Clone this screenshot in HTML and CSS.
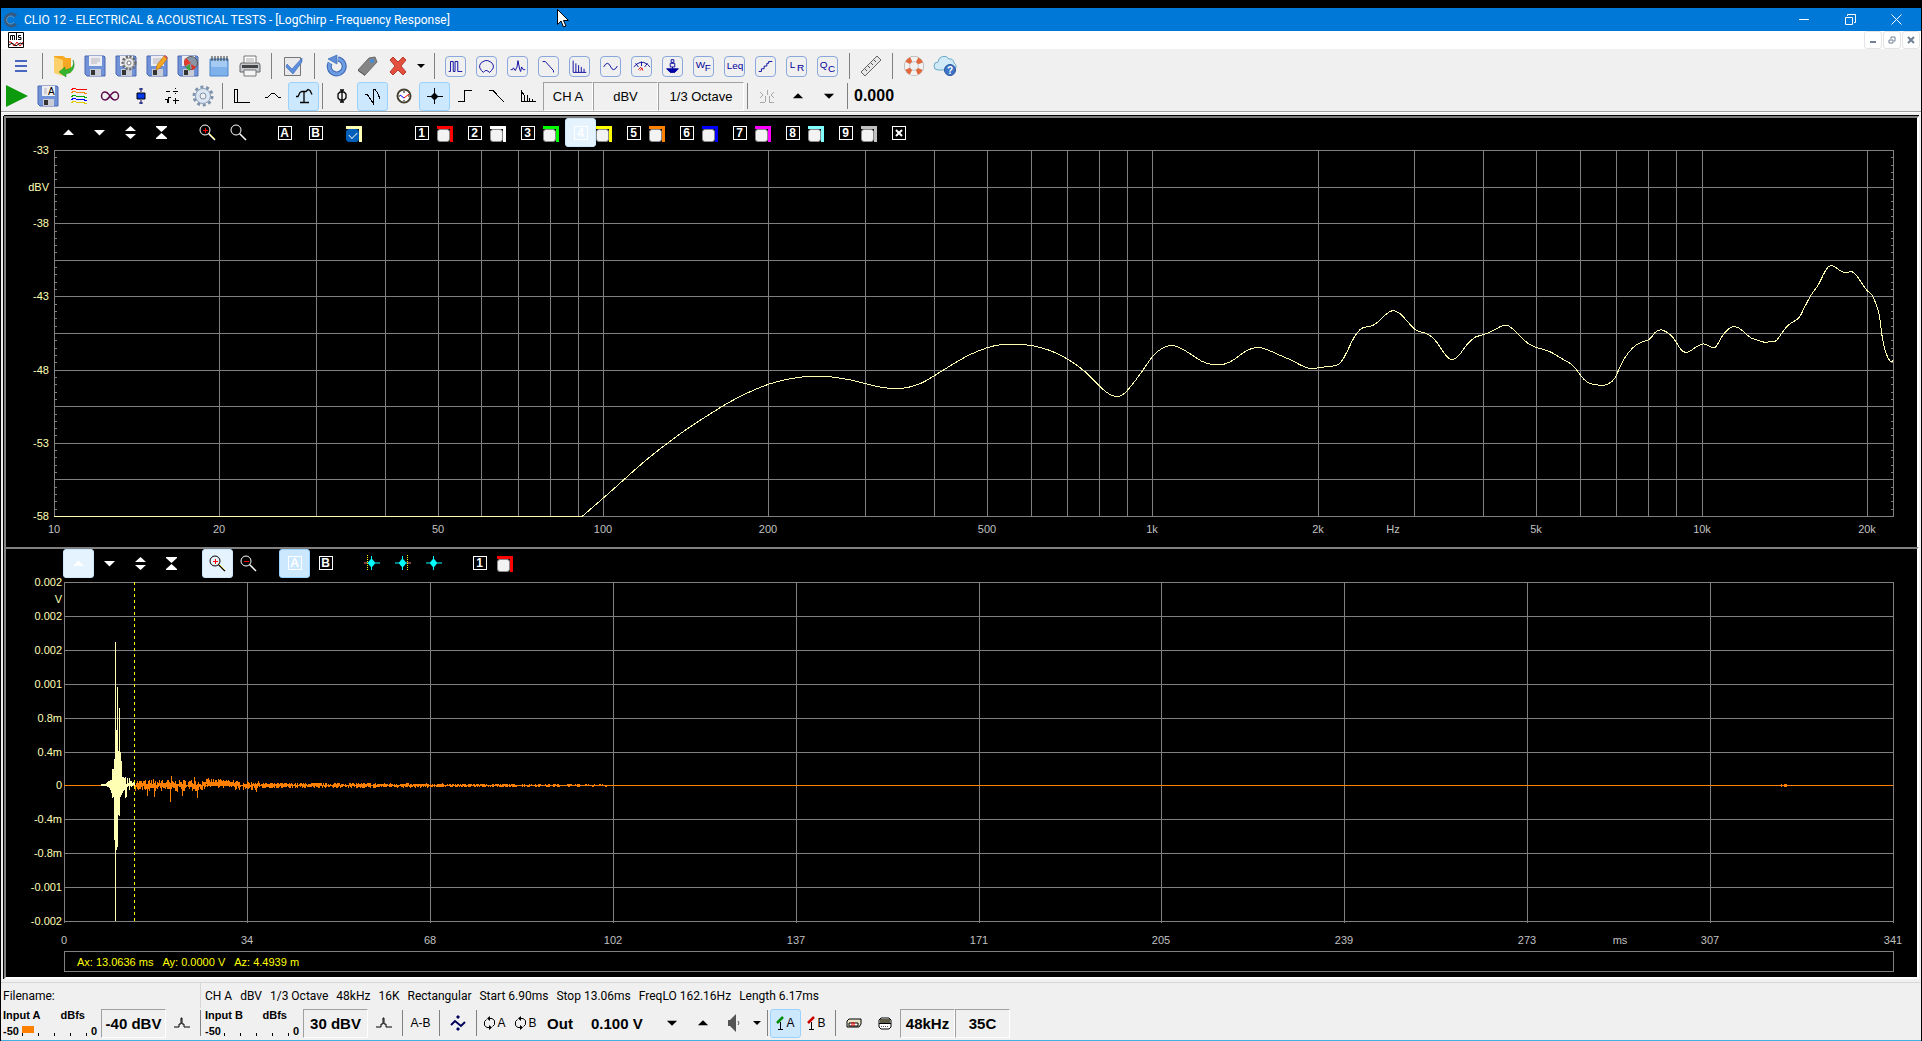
FILE: index.html
```
<!DOCTYPE html>
<html lang="en">
<head>
    <meta charset="UTF-8">
    <title>CLIO 12 - ELECTRICAL &amp; ACOUSTICAL TESTS</title>
    <link rel="stylesheet" href="styles.css">
</head>
<body>
<!-- shared icons -->
<svg class="defs" aria-hidden="true">
    <symbol id="up" viewBox="0 0 15 15"><path d="M2 10h11L7.500 4.500z"/></symbol>
    <symbol id="down" viewBox="0 0 15 15"><path d="M2 5h11l-5.500 5.500z"/></symbol>
    <symbol id="expand" viewBox="0 0 15 15"><path d="M2 6h11L7.500 1zM2 9h11l-5.500 5z"/></symbol>
    <symbol id="squeeze" viewBox="0 0 15 15"><path d="M2 1h11v1L7.500 7 2 2zM2 14h11v-1L7.500 8 2 13z"/></symbol>
    <symbol id="caret" viewBox="0 0 8 8"><path d="M0 2h8L4 6z"/></symbol>
    <symbol id="floppy" viewBox="0 0 22 22">
        <path d="M1 1h19l1 1v19H3l-2-2z" fill="#6f92d8" stroke="#4a68b0"/>
        <path d="M5 1h13v10H5z" fill="#eeeef2"/>
        <path d="M7 4h9M7 6h9M7 8h6" stroke="#b4b4bc"/>
        <path d="M6 14h11v7H6z" fill="#c9ccd6"/>
        <path d="M7 15h4v5H7z" fill="#333"/>
    </symbol>
    <symbol id="cog" viewBox="0 0 22 22">
        <circle cx="11" cy="11" r="9" fill="none" stroke="#7f93ac" stroke-width="3" stroke-dasharray="3 2.650"/>
        <circle cx="11" cy="11" r="7.500" fill="#dce6f2" stroke="#8a9fba"/>
        <circle cx="11" cy="11" r="3" fill="#f0f0f0" stroke="#7f93ac"/>
    </symbol>
    <symbol id="lens" viewBox="0 0 17 17">
        <circle cx="6" cy="6" r="5" fill="none" stroke="currentColor"/>
        <path d="M9.500 9.500l6.500 6.500" stroke="currentColor" stroke-width="1.500"/>
    </symbol>
    <symbol id="bell" viewBox="0 0 18 12"><path d="M1 10h5V7h2V1h1v6h2v3h6" fill="none" stroke="#000"/></symbol>
    <symbol id="burst" viewBox="0 0 16 16"><path d="M0 7.500h4l2-2.500 1-1V1h1v3l1 1 2 2.500h5v1h-5l-2 2.500-1 1v3H7v-3l-1-1-2-2.500H0z" fill="#0ff"/></symbol>
</svg>

<header class="title">
    <svg class="logo" width="16" height="16" viewBox="0 0 16 16"><path d="M13 4A6 6 0 1 0 13 12" fill="none" stroke="#345a80" stroke-width="3"/><path d="M11 6A4 4 0 1 0 11 10" fill="none" stroke="#6d93b5"/></svg>
    <h1>CLIO 12 - ELECTRICAL &amp; ACOUSTICAL TESTS - [LogChirp - Frequency Response]</h1>
    <div class="win">
        <button aria-label="Minimize"><svg width="11" height="11" viewBox="0 0 11 11"><path d="M0 5.500h10"/></svg></button>
        <button aria-label="Restore"><svg width="11" height="11" viewBox="0 0 11 11"><path d="M.5 3.500h7v7h-7zM2.500 2V.5h8v8H9"/></svg></button>
        <button aria-label="Close"><svg width="11" height="11" viewBox="0 0 11 11"><path d="M.5.5l10 10M10.500.5l-10 10"/></svg></button>
    </div>
</header>

<div class="menubar">
    <svg width="16" height="16" viewBox="0 0 16 16"><path d="M.5.5h15v15H.5z" fill="#fff" stroke="#000"/><path d="M2.500 8V3.500h2V8m0-4.500h2V8M8.500 1v7M13 3.500h-2.500v2H13v2h-3" fill="none" stroke="#000"/><path d="M1 10l2 0 3 4 3-4 3 4 3-4" fill="none" stroke="#e00000"/><path d="M1 13l3-2 4 3 4-3 3 1" fill="none" stroke="#000"/></svg>
    <div class="mdi">
        <button aria-label="Minimize document"><svg width="8" height="8" viewBox="0 0 8 8"><path d="M1 6h6"/></svg></button>
        <button aria-label="Restore document"><svg width="8" height="8" viewBox="0 0 8 8"><path d="M1 4h4v3H1zM3 3V1h4v4H6" stroke-width="1"/></svg></button>
        <button aria-label="Close document"><svg width="8" height="8" viewBox="0 0 8 8"><path d="M1 1l6 6M7 1L1 7"/></svg></button>
    </div>
</div>

<nav class="tools">
    <div class="bar bar1">
        <button aria-label="Menu"><svg width="14" height="14" viewBox="0 0 14 14"><path d="M1 2h12M1 7h12M1 12h12" stroke="#4a68c0" stroke-width="2"/></svg></button>
        <i class="sep"></i>
        <button aria-label="Open"><svg width="22" height="22" viewBox="0 0 22 22"><path d="M1 1h9l3 2h5v15H1z" fill="#f7a823"/><path d="M1 2l9 3v16l-9-3z" fill="#fcd06a"/><path d="M20 5c2 6-2 9-8 10v-3l-6 5 7 5v-3c7-1 10-8 7-14z" fill="#35b52e" stroke="#1c8c1c" stroke-width=".5"/></svg></button>
        <button aria-label="Save"><svg width="22" height="22"><use href="#floppy"/></svg></button>
        <button aria-label="Save settings"><svg width="22" height="22"><use href="#floppy"/><circle cx="14" cy="8" r="6" fill="#e8e8ea" stroke="#666" stroke-width="3" stroke-dasharray="2 1.500"/><circle cx="14" cy="8" r="5" fill="#e8e8ea" stroke="#999"/><circle cx="14" cy="8" r="2" fill="#fff" stroke="#777"/></svg></button>
        <button aria-label="Save notes"><svg width="22" height="22"><use href="#floppy"/><path d="M10 15l1-5 7-9 3 3-7 9z" fill="#f5a623" stroke="#b8721a" stroke-width=".7"/><path d="M18 1l1-1 3 3-1 1z" fill="#e2574c"/></svg></button>
        <button aria-label="Export graph"><svg width="22" height="22"><use href="#floppy"/><circle cx="14" cy="8" r="6.500" fill="#8a96a8" stroke="#555"/><path d="M14 8L9 3a7 7 0 0 0-1 8z" fill="#e23b2e"/><path d="M13 9l-4 3a7 7 0 0 0 4 4z" fill="#3aa33a"/><path d="M14 9l5 3a6 6 0 0 1-4 3z" fill="#d8372c"/></svg></button>
        <button aria-label="Notes"><svg width="22" height="22" viewBox="0 0 22 22"><path d="M2 4h18v17H2z" fill="#7fb2ea" stroke="#4c86cc"/><path d="M3 5h16v7H3z" fill="#a5caf3"/><path d="M4 1v5M7 1v5M10 1v5M13 1v5M16 1v5M19 1v5" stroke="#333"/></svg></button>
        <button aria-label="Print"><svg width="22" height="22" viewBox="0 0 22 22"><path d="M5 1h12v8H5z" fill="#fff" stroke="#777"/><path d="M7 4h8M7 6h8" stroke="#aaa"/><path d="M2 8h18l1 2v7H1v-7z" fill="#c6c9ce" stroke="#666"/><path d="M3 10h16v3H3z" fill="#444"/><path d="M5 15h12v6H5z" fill="#f5f5f5" stroke="#777"/></svg></button>
        <i class="sep"></i>
        <button aria-label="Options"><svg width="22" height="22" viewBox="0 0 22 22"><path d="M2.500 2.500h16v18h-16z" fill="#e9e9ec" stroke="#777"/><path d="M5 9l5 5L20 3v4l-9 12-7-7z" fill="#5c8edc" stroke="#3c68b4" stroke-width=".6"/></svg></button>
        <i class="sep"></i>
        <button aria-label="Undo"><svg width="22" height="22" viewBox="0 0 22 22"><path d="M5 8a7.500 7.500 0 1 0 8-4" fill="none" stroke="#3c68b4" stroke-width="5"/><path d="M5 8a7.500 7.500 0 1 0 8-4" fill="none" stroke="#6f9de2" stroke-width="3"/><path d="M3 4l9-4v9z" fill="#5f8fd8" stroke="#3c68b4" stroke-width=".7"/></svg></button>
        <button aria-label="Tag"><svg width="22" height="22" viewBox="0 0 22 22"><path d="M2 15L13 3l6-1 2 5L9 20z" fill="#858585" stroke="#6a6a6a"/><path d="M2 15l7 5v1l-7-5z" fill="#555"/><circle cx="16" cy="6" r="2" fill="#3c8ee0"/></svg></button>
        <button aria-label="Delete"><svg width="20" height="20" viewBox="0 0 20 20"><path d="M2 4l3-3 5 5 5-5 3 3-5 6 5 6-3 3-5-5-5 5-3-3 5-6z" fill="#e4503f" stroke="#b8382c"/></svg></button>
        <button class="thin" aria-label="Delete options"><svg width="8" height="8"><use href="#caret"/></svg></button>
        <i class="sep"></i>
        <button aria-label="MLS"><svg class="tile" viewBox="0 0 21 21"><path d="M3 16h2V5h3v11h2V5h3v11h5"/></svg></button>
        <button aria-label="Polar"><svg class="tile" viewBox="0 0 21 21"><path d="M7 17l-2-2-2-3V9l2-3 4-2h3l4 2 2 3v3l-2 3-2 2-3-2H9z"/></svg></button>
        <button aria-label="Impulse"><svg class="tile" viewBox="0 0 21 21"><path d="M3 14h2l1-2 2 3 2-4 1-7 2 10 1 2 1-5 2 3h2"/></svg></button>
        <button aria-label="Decay"><svg class="tile" viewBox="0 0 21 21"><path d="M4 5h3l9 10v2"/></svg></button>
        <button aria-label="FFT"><svg class="tile" viewBox="0 0 21 21"><path d="M3.500 4v13H18M6.500 17V7M9.500 17V9M12.500 17v-6M15.500 17v-4"/></svg></button>
        <button aria-label="Sinusoidal"><svg class="tile" viewBox="0 0 21 21"><path d="M3 11l2-3 2-1 2 1 3 5 2 1 2-1 2-3"/></svg></button>
        <button aria-label="Multi meter"><svg class="tile" viewBox="0 0 21 21"><path d="M2 11l3-3 4-2h4l4 2 3 3M4 7l3 4M10.500 5v5M17 7l-3 4"/><path d="M7 14l3-3M9 15l2-3 1 3" stroke="#d00"/></svg></button>
        <button aria-label="Wow and flutter"><svg class="tile" viewBox="0 0 21 21"><path d="M9 3h3v3H9zM8 7h5v4H8zM10.500 11v2"/><path d="M4 13h13l-4 4H8z" fill="#00a"/></svg></button>
        <button aria-label="Waterfall"><svg class="tile" viewBox="0 0 21 21"><text x="2" y="12">W</text><text x="12" y="16">F</text></svg></button>
        <button aria-label="Leq"><svg class="tile" viewBox="0 0 21 21"><text x="2" y="13">Leq</text></svg></button>
        <button aria-label="Linearity"><svg class="tile" viewBox="0 0 21 21"><path d="M3 16h3v-3h3v-3h3V7h2V5h4"/></svg></button>
        <button aria-label="Loudspeaker response"><svg class="tile" viewBox="0 0 21 21"><text x="3" y="12">L</text><text x="11" y="16">R</text></svg></button>
        <button aria-label="Quality control"><svg class="tile" viewBox="0 0 21 21"><text x="2" y="12">Q</text><text x="11" y="17">C</text></svg></button>
        <i class="sep"></i>
        <button aria-label="Ruler"><svg width="22" height="22" viewBox="0 0 22 22"><path d="M1 17L17 1l4 4L5 21z" fill="#e6e6e6" stroke="#666"/><path d="M5 14l2 2M8 11l2 2M11 8l2 2M14 5l2 2" stroke="#555"/></svg></button>
        <i class="sep"></i>
        <button aria-label="Help"><svg width="22" height="22" viewBox="0 0 22 22"><circle cx="11" cy="11" r="7" fill="none" stroke="#999" stroke-width="6"/><circle cx="11" cy="11" r="7" fill="none" stroke="#f2f2f2" stroke-width="5"/><circle cx="11" cy="11" r="7" fill="none" stroke="#e2683c" stroke-width="5" stroke-dasharray="5 6" stroke-dashoffset="-3"/></svg></button>
        <button aria-label="Online help"><svg width="24" height="22" viewBox="0 0 24 22"><path d="M5 15a4 4 0 0 1 0-8 6 6 0 0 1 11-3 4 4 0 0 1 5 4 4 4 0 0 1 0 7z" fill="#cfe9f6" stroke="#6aa9c8"/><circle cx="17" cy="15" r="5.500" fill="#3d74c8" stroke="#2a559a"/><text x="14" y="19" class="qm">?</text></svg></button>
    </div>

    <div class="bar bar2">
        <button aria-label="Go"><svg width="22" height="22" viewBox="0 0 22 22"><path d="M0 0l22 11L0 22z" fill="#0c9a0c"/></svg></button>
        <button aria-label="Autosave"><svg width="22" height="22"><use href="#floppy"/><path d="M10 2h8v9h-8z" fill="#f0f0f0"/><text x="11" y="10" class="sm">A</text></svg></button>
        <button aria-label="Overlay"><svg width="18" height="18" viewBox="0 0 18 18" class="px"><path d="M1 3l3-2 4 2 4-1 5 1" stroke="red"/><path d="M1 6l3-2 4 2 4-1 5 2" stroke="#f80"/><path d="M1 10l3-2 4 2 4-1 5 2" stroke="#0a0"/><path d="M1 13l3-2 4 2 4-1 5 2" stroke="#00f"/><path d="M1 16l3-2 4 2 4-1 5 2" stroke="#dc0"/></svg></button>
        <button aria-label="Loop"><svg width="18" height="12" viewBox="0 0 18 12"><path d="M9 6c-2-3-3-4-5-4a3.500 4 0 0 0 0 8c2 0 3-1 5-4s3-4 5-4a3.500 4 0 0 1 0 8c-2 0-3-1-5-4z" fill="none" stroke="#5c0a4c" stroke-width="1.500"/></svg></button>
        <button aria-label="Process"><svg width="10" height="18" viewBox="0 0 10 18"><path d="M1 6h8v6H1z" fill="#0038e8" stroke="#000"/><path d="M5 1v4M5 13v4M3 2h4M3 16h4" stroke="#000066" stroke-width="1"/></svg></button>
        <button aria-label="Math"><svg width="14" height="16" viewBox="0 0 14 16" class="px"><path d="M1 3h4M8 3h5M10.500 0v1M10.500 5v1M0 11h2l1 4V9h3M8 12.500h6M10.500 10v6"/></svg></button>
        <button aria-label="Settings"><svg width="22" height="22"><use href="#cog"/></svg></button>
        <i class="sep"></i>
        <button aria-label="Time"><svg width="17" height="16" viewBox="0 0 17 16" class="px"><path d="M1.500 1v13.500H17M4.500 14V1H2"/></svg></button>
        <button aria-label="Smooth"><svg width="16" height="10" viewBox="0 0 16 10" class="px"><path d="M0 7l3-1 4-4h2l4 4 3 1"/></svg></button>
        <button class="on" aria-label="Frequency response"><svg width="18" height="16" viewBox="0 0 18 16"><path d="M1 8.500h2l2-4 2-1h4l2-2 2 1 2 4M9 3.500v11M5 14.500h9" fill="none" stroke="#000" stroke-width="1.300"/></svg></button>
        <i class="sep s7"></i>
        <button aria-label="Phase"><svg width="10" height="14" viewBox="0 0 10 14"><path d="M5 1v12M3 1h4M3 13h4M1 5l2-2h4l2 2v4l-2 2H3L1 9z" fill="none" stroke="#000" stroke-width="1.300"/></svg></button>
        <button class="on" aria-label="Group delay"><svg width="17" height="16" viewBox="0 0 17 16" class="px"><path d="M1 6h2l4 6 2 3V1h2l3 5 2 5"/></svg></button>
        <button aria-label="Wavelet"><svg width="16" height="16" viewBox="0 0 16 16"><circle cx="8" cy="8" r="6.500" fill="#fff" stroke="#444030" stroke-width="2"/><path d="M4 7l4 3" stroke="#00f"/><path d="M8 10l5-4" stroke="red"/><path d="M8 3v2M3 8h1M12 8h1M8 12v1" stroke="#000"/></svg></button>
        <button class="on" aria-label="Impulse response"><svg width="16" height="16" viewBox="0 0 16 16"><path d="M0 8h4l3-3V0h1v5l3 3h5v1h-5l-3 3v4H7v-4L4 9H0z"/></svg></button>
        <button aria-label="Step response"><svg width="15" height="14" viewBox="0 0 15 14" class="px"><path d="M0 12.500h6.500v-11H14"/></svg></button>
        <button aria-label="Schroeder decay"><svg width="16" height="14" viewBox="0 0 16 14" class="px"><path d="M0 1.500h4L14 12v1"/></svg></button>
        <button aria-label="Energy time"><svg width="16" height="14" viewBox="0 0 16 14" class="px"><path d="M1.500 1v11.500H16M2 3l2 3 1 6M7 6v6M9 9v3M12 10v2"/></svg></button>
        <button class="box w50">CH A</button>
        <button class="box w65">dBV</button>
        <button class="box w86">1/3 Octave</button>
        <i class="sep s7"></i>
        <button disabled aria-label="Shift"><svg width="14" height="14" viewBox="0 0 14 14" class="px"><path d="M0 3l3 3-3 3M14 3l-3 3 3 3M5 13V7M7 1v5M9 13V7M0 13h5M9 13h5"/></svg></button>
        <button aria-label="Increase"><svg width="14" height="14"><use href="#up"/></svg></button>
        <button aria-label="Decrease"><svg width="14" height="14"><use href="#down"/></svg></button>
        <i class="sep s7"></i>
        <output class="value">0.000</output>
    </div>
</nav>

<main>
    <section class="panel">
        <div class="ctl">
            <button aria-label="Shift up"><svg><use href="#up"/></svg></button>
            <button aria-label="Shift down"><svg><use href="#down"/></svg></button>
            <button aria-label="Expand"><svg><use href="#expand"/></svg></button>
            <button aria-label="Compress"><svg><use href="#squeeze"/></svg></button>
            <button class="gap" aria-label="Zoom in"><svg width="17" height="17"><use href="#lens"/><path class="sign" d="M6 4v5M4 6.500h5"/><path class="handle" d="M10 9l6 6"/></svg></button>
            <button aria-label="Zoom out"><svg width="17" height="17"><use href="#lens"/></svg></button>
            <button class="gap"><b>A</b></button>
            <button><b>B</b></button>
            <label class="mem main"><input type="checkbox" checked aria-label="Show current curve"></label>
            <button><b>1</b></button><label class="mem red"><input type="checkbox" aria-label="Overlay 1"></label>
            <button><b>2</b></button><label class="mem white"><input type="checkbox" aria-label="Overlay 2"></label>
            <button><b>3</b></button><label class="mem green"><input type="checkbox" aria-label="Overlay 3"></label>
            <button class="hot"><b>4</b></button><label class="mem yellow"><input type="checkbox" aria-label="Overlay 4"></label>
            <button><b>5</b></button><label class="mem orange"><input type="checkbox" aria-label="Overlay 5"></label>
            <button><b>6</b></button><label class="mem blue"><input type="checkbox" aria-label="Overlay 6"></label>
            <button><b>7</b></button><label class="mem pink"><input type="checkbox" aria-label="Overlay 7"></label>
            <button><b>8</b></button><label class="mem cyan"><input type="checkbox" aria-label="Overlay 8"></label>
            <button><b>9</b></button><label class="mem grey"><input type="checkbox" aria-label="Overlay 9"></label>
            <button aria-label="Clear overlays"><b><svg width="12" height="12" viewBox="0 0 12 12"><path d="M3 3l6 6M9 3l-6 6" stroke="#fff" stroke-width="2"/></svg></b></button>
        </div>
        <div class="plot"><svg id="freq" role="img" aria-label="Frequency response"></svg></div>
    </section>

    <section class="panel time">
        <div class="ctl">
            <button class="hot" aria-label="Shift up"><svg><use href="#up"/></svg></button>
            <button aria-label="Shift down"><svg><use href="#down"/></svg></button>
            <button aria-label="Expand"><svg><use href="#expand"/></svg></button>
            <button aria-label="Compress"><svg><use href="#squeeze"/></svg></button>
            <button class="gap hot dark" aria-label="Zoom in"><svg width="17" height="17"><use href="#lens"/><path class="sign" d="M6 4v5M4 6.500h5"/><path class="handle" d="M10 9l6 6"/></svg></button>
            <button aria-label="Zoom out"><svg width="17" height="17"><use href="#lens"/><path class="sign" d="M4 6.500h5"/></svg></button>
            <button class="gap on"><b>A</b></button>
            <button><b>B</b></button>
            <button class="gap" aria-label="Window start"><svg width="16" height="16"><use href="#burst"/><path d="M0 8h3" stroke="red"/><path d="M3.500 0v16" stroke="#ff0" stroke-dasharray="1 1"/></svg></button>
            <button aria-label="Window stop"><svg width="16" height="16"><use href="#burst"/><path d="M12 8h4" stroke="red"/><path d="M12.500 0v16" stroke="#ff0" stroke-dasharray="1 1"/></svg></button>
            <button aria-label="Window reset"><svg width="16" height="16"><use href="#burst"/></svg></button>
            <button class="gap"><b>1</b></button><label class="mem red"><input type="checkbox" aria-label="Impulse overlay 1"></label>
        </div>
        <div class="plot"><svg id="imp" role="img" aria-label="Impulse response"></svg></div>
        <p class="readout"><span>Ax: 13.0636 ms</span><span>Ay: 0.0000 V</span><span>Az: 4.4939 m</span></p>
    </section>
</main>

<footer>
    <div class="status">
        <span class="file">Filename:</span>
        <span>CH A</span><span>dBV</span><span>1/3 Octave</span><span>48kHz</span><span>16K</span><span>Rectangular</span><span>Start 6.90ms</span><span>Stop 13.06ms</span><span>FreqLO 162.16Hz</span><span>Length 6.17ms</span>
    </div>
    <div class="bar bar3">
        <div class="meter">
            <span>Input A</span><span class="unit">dBfs</span>
            <div class="scale"><span>-50</span><i class="ticks"><i class="level"></i></i><span>0</span></div>
        </div>
        <button class="box big w65">-40 dBV</button>
        <button aria-label="Autorange A"><svg width="18" height="12"><use href="#bell"/></svg></button>
        <i class="sep"></i>
        <div class="meter">
            <span>Input B</span><span class="unit">dBfs</span>
            <div class="scale"><span>-50</span><i class="ticks"></i><span>0</span></div>
        </div>
        <button class="box big w65">30 dBV</button>
        <button aria-label="Autorange B"><svg width="18" height="12"><use href="#bell"/></svg></button>
        <i class="sep"></i>
        <button class="lt">A-B</button>
        <i class="sep"></i>
        <button aria-label="Generator"><svg width="16" height="18" viewBox="0 0 16 18"><path d="M1 11l4-4 6 5 4-4" fill="none" stroke="#00005c" stroke-width="2"/><path d="M6 3l2-2 2 2-2 2zM6 15l2-2 2 2-2 2z" fill="#00005c"/></svg></button>
        <i class="sep"></i>
        <button class="lt"><svg width="13" height="14" viewBox="0 0 13 14"><path d="M6 2.500h3l2.500 2v4l-2 2M7 11.500H4l-2.500-2v-4l2-2" fill="none" stroke="#000"/><path d="M4 2.500L7 0v5zM9 11.500L6 9v5z"/></svg>A</button>
        <button class="lt"><svg width="13" height="14" viewBox="0 0 13 14"><path d="M6 2.500h3l2.500 2v4l-2 2M7 11.500H4l-2.500-2v-4l2-2" fill="none" stroke="#000"/><path d="M4 2.500L7 0v5zM9 11.500L6 9v5z"/></svg>B</button>
        <button class="big out">Out</button>
        <output class="big level-out">0.100 V</output>
        <button aria-label="Output down"><svg width="14" height="14"><use href="#down"/></svg></button>
        <button aria-label="Output up"><svg width="14" height="14"><use href="#up"/></svg></button>
        <button aria-label="Mute"><svg width="13" height="20" viewBox="0 0 13 20"><path d="M1 7h2l6-6v18l-6-6H1z" fill="#555"/><path d="M11 8l1 2-1 2" fill="none" stroke="#555"/></svg></button>
        <button class="thin" aria-label="Mute options"><svg width="8" height="8"><use href="#caret"/></svg></button>
        <i class="sep"></i>
        <button class="lt on"><svg width="9" height="14" viewBox="0 0 9 14"><path d="M1 7l6-6" stroke="#008c00" stroke-width="2.500"/><path d="M4.500 6v7M2 13.500h5" stroke="#000"/></svg>A</button>
        <button class="lt"><svg width="9" height="14" viewBox="0 0 9 14"><path d="M1 7l6-6" stroke="#d00000" stroke-width="2.500"/><path d="M4.500 6v7M2 13.500h5" stroke="#000"/></svg>B</button>
        <i class="sep"></i>
        <button aria-label="Hardware"><svg width="16" height="10" viewBox="0 0 16 10"><path d="M1 3l2-2h12v5l-2 3H1z" fill="#e8e4c8" stroke="#000"/><path d="M3 5h9v3H3z" fill="#fff" stroke="#000"/><path d="M6 4v4M8 4v4" stroke="red"/></svg></button>
        <button aria-label="Turntable"><svg width="14" height="13" viewBox="0 0 14 13"><path d="M1 3l2-2h8l2 2v7l-2 2H3l-2-2z" fill="#fff" stroke="#000"/><path d="M2 2h10v4H2z" fill="#5c5c48"/><path d="M1 6.500h12" stroke="#000"/><path d="M3 9.500h8" stroke="#555" stroke-dasharray="1 1"/></svg></button>
        <button class="box big w55">48kHz</button>
        <button class="box big w55">35C</button>
    </div>
</footer>

<svg class="pointer" width="12" height="19" viewBox="0 0 12 19"><path d="M.5.5v15l3.500-3.500 2.500 6 2.500-1-2.500-5.500h5z" fill="#fff" stroke="#000"/></svg>
<script src="script.js"></script>
</body>
</html>
```
FILE: styles.css
```
*{box-sizing:border-box;}
html{height:100%;overflow:hidden;}
body,h1,p{margin:0;}
body{
    display:flex;
    flex-direction:column;
    height:100%;
    min-height:600px;
    padding:8px 1px 0;
    overflow:hidden;
    background:#000;
    font-family:"Liberation Sans",Arial,sans-serif;
    font-size:13px;
    color:#000;
}
button{
    display:flex;
    flex:none;
    align-items:center;
    justify-content:center;
    width:31px;
    height:29px;
    padding:0;
    border:1px solid transparent;
    border-radius:3px;
    background:none;
    color:inherit;
    font:inherit;
}
svg{flex:none;overflow:visible;}
.defs{position:absolute;width:0;height:0;overflow:hidden;}

/* title and menu */
.title{
    display:flex;
    flex:none;
    align-items:center;
    height:23px;
    padding-left:2px;
    background:#0078d7;
    color:#fff;
}
.title h1{
    flex:1;
    margin-left:5px;
    font:12px/16px Roboto,"Open Sans",sans-serif;
    white-space:nowrap;
}
.win{display:flex;padding-right:2px;}
.win button{width:46px;height:23px;}
.win svg{fill:none;stroke:#fff;}
.menubar{
    display:flex;
    flex:none;
    align-items:center;
    justify-content:space-between;
    height:18px;
    padding:0 1px 0 7px;
    background:#fff;
}
.mdi{display:flex;gap:1px;}
.mdi button{width:18px;height:18px;border-color:#e4e4e4;}
.mdi svg{fill:none;stroke:#6f8094;stroke-width:2;}

/* toolbars */
.tools{
    flex:none;
    border-bottom:1px solid #a0a0a0;
    background:#f0f0f0;
}
.bar{display:flex;align-items:center;white-space:nowrap;}
.bar1{height:32px;padding:2px 0 0 4px;}
.bar2{height:30px;}
.sep{
    flex:none;
    width:8px;
    height:26px;
    background:linear-gradient(#808080,#808080) center/1px 100% no-repeat;
}
.bar1 .sep{width:12px;}
.bar3 .sep{width:6px;}
.bar .s7{width:7px;}
.bar .thin{width:15px;}
.tile{
    width:21px;
    height:21px;
    border:1px solid #8aa8dc;
    border-radius:4px;
    fill:none;
    stroke:#00009c;
}
.tile text{fill:#00009c;stroke:none;font-size:11px;}
.sm{font-size:10px;}
.qm{font-size:10px;font-weight:bold;fill:#fff;}
.px{fill:none;stroke:#000;shape-rendering:crispEdges;}
button:disabled .px{stroke:#a8a8a8;}
.on{border-color:#99d1ff;background:#cce8ff;}
.hot{border-color:#cce8ff;background:#e5f3ff;}
.box{
    border-color:#a0a0a0 #fff #fff #a0a0a0;
    border-radius:0;
}
.w50{width:50px;}
.w55{width:55px;}
.w65{width:65px;}
.w86{width:86px;}
.big{font-size:15px;font-weight:bold;}
.value{margin-left:3px;font-size:16px;font-weight:bold;}

/* charts */
main{
    display:flex;
    flex:1;
    flex-direction:column;
    min-height:0;
    padding:2px 2px 0;
    border-top:1px solid #fff;
    background:#f0f0f0;
}
.panel{
    display:flex;
    flex:1 1 0;
    flex-direction:column;
    min-height:0;
    margin-left:1px;
    border:2px solid #808080;
    border-right-color:#fff;
    border-bottom:0;
    background:#000;
    box-shadow:-1px 0 #000;
    color:#fff;
}
.panel:first-child{margin-top:1px;box-shadow:-1px 0 #000,0 -1px #000;}
.time{border-bottom:2px solid #fff;}
.ctl{display:flex;flex:none;align-items:center;height:29px;padding-left:47px;}
.time .ctl{padding-left:57px;}
.ctl svg{fill:#fff;}
.ctl button > svg:not([width]){width:15px;height:15px;}
.ctl .gap{margin-left:15px;}
.ctl .dark{color:#000;}
.ctl .sign{stroke:#f00;shape-rendering:crispEdges;}
.ctl .handle{stroke:#e6d44a;}
.ctl b{
    width:14px;
    height:14px;
    border:1px solid #fff;
    font-size:12px;
    line-height:12px;
    text-align:center;
}
.mem{
    display:flex;
    flex:none;
    width:16px;
    height:16px;
    margin:2px 6px 0 0;
    border:solid;
    border-width:3px 3px 0 0;
}
.time .mem{margin-left:2px;}
.mem input{
    flex:none;
    width:13px;
    height:13px;
    margin:0;
    appearance:none;
    border:1px solid #8a8a8a;
    border-radius:3px;
    background:#f3f3f3;
}
.mem input:checked{border-color:#005fb8;background:#005fb8;}
.mem input:checked::after{
    content:"";
    display:block;
    width:7px;
    height:4px;
    margin:2px;
    border:solid #cfe2f5;
    border-width:0 0 1px 1px;
    transform:rotate(-45deg);
}
.main{margin-left:15px;margin-right:44px;color:#ffffb4;}
.red{color:#f00;}
.white{color:#fff;}
.green{color:#0f0;}
.yellow{color:#ff0;}
.orange{color:#ff8000;}
.blue{color:#00f;}
.pink{color:#f0f;}
.cyan{color:#80ffff;}
.grey{color:#c0c0c0;}
.plot{flex:1;min-height:0;}
.plot svg{display:block;width:100%;font-size:11px;}
.plot path{fill:none;shape-rendering:crispEdges;}
.grid{stroke:#808080;}
.curve{stroke:#ffffb4;}
.ytext{fill:#ffffb4;text-anchor:end;}
.xtext{fill:#c0c0c0;text-anchor:middle;}
.tail{stroke:#ff8000;}
.gate{stroke:#ffffb4;}
.marker{stroke:#ff0;stroke-dasharray:3 3;}
.readout{
    display:flex;
    flex:none;
    gap:9px;
    align-items:center;
    height:21px;
    margin:0 23px 5px 58px;
    padding-left:12px;
    border:1px solid #808080;
    color:#ff0;
    font-size:11px;
}

/* footer */
footer{
    flex:none;
    padding-top:3px;
    border-bottom:1px solid #42b0e0;
    background:#f0f0f0;
}
.status{
    display:flex;
    align-items:center;
    gap:8px;
    height:26px;
    border-top:1px solid #d7d7d7;
    font:12px/16px Roboto,"Open Sans",sans-serif;
    white-space:nowrap;
}
.file{
    width:200px;
    height:25px;
    margin-right:-4px;
    padding:5px 0 0 2px;
    border-right:1px solid #d7d7d7;
}
.bar3{height:32px;padding-bottom:2px;}
.meter{
    display:flex;
    flex:none;
    flex-wrap:wrap;
    align-content:space-between;
    justify-content:space-between;
    width:100px;
    height:30px;
    padding:0 4px 0 2px;
    font-size:11px;
    line-height:14px;
    font-weight:bold;
}
.unit{margin-right:12px;}
.scale{display:flex;width:100%;}
.ticks{
    flex:1;
    height:10px;
    margin:2px 3px 0;
    background:repeating-linear-gradient(90deg,#000 0 1px,transparent 1px 16px) bottom/100% 3px no-repeat;
}
.level{display:block;width:12px;height:7px;background:#ff8000;}
.lt{font-size:12px;}
.lt svg{margin-right:1px;}
.bar .out{width:38px;}
.level-out{width:77px;padding-left:12px;}

.pointer{position:absolute;left:557px;top:9px;}
```
FILE: script.js
```
// both traces are sampled in the pixel grid of this box, then scaled to the plot
const FREQ = {x:54, y:150, w:1839, h:367};
const response = [54,517,582,517,604,498,624,480,645,461,668,443,687,429,704,418,723,406,739,397,754,390,769,384,
    784,380,801,377,816,376,833,377,851,380,866,384,883,388,896,389,908,388,923,383,934,376,950,366,965,357,978,351,
    995,345,1012,344,1031,345,1050,350,1068,359,1085,371,1102,389,1110,395,1116,397,1122,396,1129,389,1142,372,
    1153,355,1162,348,1171,345,1179,347,1189,353,1202,362,1212,365,1224,365,1234,360,1244,352,1250,349,1258,347,
    1266,349,1279,355,1289,359,1304,367,1311,369,1324,367,1336,366,1341,363,1347,352,1354,337,1360,329,1365,327,
    1373,326,1379,321,1387,313,1393,310,1400,313,1407,321,1415,330,1421,332,1429,334,1437,342,1443,352,1449,359,
    1453,360,1459,356,1467,344,1476,336,1484,335,1494,330,1505,324,1511,327,1519,335,1528,344,1537,348,1550,351,
    1560,358,1572,364,1578,372,1584,380,1590,384,1597,385,1603,386,1609,384,1615,379,1619,369,1625,357,1633,347,
    1641,342,1650,340,1654,333,1660,329,1667,332,1673,337,1679,347,1683,352,1688,353,1697,346,1705,343,1713,349,
    1717,346,1722,336,1728,329,1733,326,1740,328,1750,338,1757,340,1766,343,1771,341,1776,342,1783,331,1790,323,
    1799,319,1804,308,1812,293,1818,286,1823,275,1828,266,1833,265,1839,270,1845,273,1851,271,1855,273,1861,282,
    1867,291,1872,294,1877,306,1880,318,1882,337,1885,351,1888,358,1891,363,1893,360];

// gated part of the impulse, one [top, bottom] per column from x = 101
const gate = [[785,787],[785,787],[785,787],[785,787],[785,787],[784,787],[783,788],[782,788],[782,789],[781,791],
    [781,794],[770,799],[770,798],[760,841],[642,922],[730,851],[687,848],[751,816],[708,817],[753,798],[762,796],
    [778,794],[778,792],[779,791],[778,799],[785,798],[779,788],[784,787],[779,791],[782,787],[782,788],[784,787],
    [783,786],[781,787]];
const spikes = {147:[785,797], 153:[780,789], 154:[784,798], 162:[781,788], 170:[784,803], 171:[777,790],
    177:[785,793], 182:[785,797], 194:[778,790], 197:[785,799], 208:[779,787], 229:[782,788], 255:[784,791], 256:[785,793]};

function add(svg, tag, cls, attrs, text) {
    const el = document.createElementNS("http://www.w3.org/2000/svg", tag);
    el.setAttribute("class", cls);
    for (const k in attrs) el.setAttribute(k, attrs[k]);
    if (text !== undefined) el.textContent = text;
    svg.appendChild(el);
}

function reset(svg) {
    const box = svg.parentNode;
    svg.innerHTML = "";
    svg.setAttribute("height", 0);
    const size = [box.clientWidth, box.clientHeight];
    svg.setAttribute("height", size[1]);
    return size;
}

function drawFreq() {
    const svg = document.getElementById("freq");
    const [W, H] = reset(svg);
    const l = 48, t = 3, w = W - l - 24, h = H - t - 31;
    const decade = w / 3.3487;
    const px = f => Math.round(l + Math.log10(f / 10) * decade);
    let d = "";
    for (let i = 0; i <= 10; i++) d += `M${l} ${Math.round(t + h * i / 10) + .5}H${l + w}`;
    for (let i = 0; i < 50; i++) {
        const y = Math.round(t + h * i / 50) + .5;
        d += `M${l} ${y}h3M${l + w - 2} ${y}h3`;
    }
    for (let m = 10; m <= 10000; m *= 10)
        for (let k = 1; k < 10 && m * k <= 20000; k++) d += `M${px(m * k) + .5} ${t}v${h}`;
    d += `M${l + w + .5} ${t}v${h + 1}`;
    add(svg, "path", "grid", {d});

    for (let i = 0; i <= 5; i++)
        add(svg, "text", "ytext", {x: l - 5, y: Math.round(t + h * i / 5) + 4}, -33 - i * 5);
    add(svg, "text", "ytext", {x: l - 5, y: Math.round(t + h / 10) + 4}, "dBV");
    const marks = {10:"10", 20:"20", 50:"50", 100:"100", 200:"200", 500:"500", 1000:"1k", 2000:"2k", 2740:"Hz", 5000:"5k", 10000:"10k", 20000:"20k"};
    for (const f in marks) add(svg, "text", "xtext", {x: px(f), y: t + h + 17}, marks[f]);

    const pts = [];
    for (let i = 0; i < response.length; i += 2)
        pts.push([l + (response[i] - FREQ.x) * w / FREQ.w, t + .5 + (response[i + 1] - FREQ.y) * h / FREQ.h]);
    // smooth through the midpoints
    let c = `M${pts[0]}L${pts[1]}`;
    for (let i = 2; i < pts.length - 1; i++)
        c += `Q${pts[i]} ${(pts[i][0] + pts[i + 1][0]) / 2},${(pts[i][1] + pts[i + 1][1]) / 2}`;
    c += `L${pts[pts.length - 1]}`;
    add(svg, "path", "curve", {d: c});
}

function drawImpulse() {
    const svg = document.getElementById("imp");
    const [W, H] = reset(svg);
    const l = 58, t = 4, w = W - l - 24, h = H - t - 31;
    const px = x => l + (x - 64) * w / 1829;
    const py = y => t + (y - 582) * h / 340;
    let d = "";
    for (let i = 0; i <= 10; i++) {
        d += `M${l} ${Math.round(t + h * i / 10) + .5}h${w}`;
        d += `M${Math.round(l + w * i / 10) + .5} ${t}v${h + 2}`;
    }
    add(svg, "path", "grid", {d});

    ["0.002", "0.002", "0.002", "0.001", "0.8m", "0.4m", "0", "-0.4m", "-0.8m", "-0.001", "-0.002"].forEach((s, i) =>
        add(svg, "text", "ytext", {x: l - 2, y: Math.round(t + h * i / 10) + 4}, s));
    add(svg, "text", "ytext", {x: l - 2, y: t + 21}, "V");
    [0, 34, 68, 102, 137, 171, 205, 239, 273, 307, 341].forEach((s, i) =>
        add(svg, "text", "xtext", {x: Math.round(l + w * i / 10), y: t + h + 23}, s));
    add(svg, "text", "xtext", {x: Math.round(l + w * .851), y: t + h + 23}, "ms");

    const col = (x, a, b) => `M${px(x) + .5} ${py(a)}V${py(b)}`;
    let seed = 7;
    const rnd = () => (seed = seed * 16807 % 2147483647) / 2147483647;
    let o = `M${l} ${Math.round(py(786)) + .5}H${l + w}`;
    for (let x = 135; x < 640; x++) {
        const amp = x < 205 ? 5.5 : x < 260 ? 4 : Math.max(0, 2.6 - (x - 260) / 170);
        const mid = x > 203 && x < 235 ? 784 : 786;
        let a = mid - rnd() * amp, b = mid + 1 + rnd() * amp;
        if (spikes[x]) [a, b] = spikes[x];
        o += col(x, Math.round(a), Math.round(b));
    }
    for (const x of [1781, 1784, 1785, 1786]) o += col(x, 785, 788);
    add(svg, "path", "tail", {d: o});
    add(svg, "path", "gate", {d: gate.map((g, i) => col(101 + i, g[0], g[1])).join("")});
    add(svg, "path", "marker", {d: `M${Math.round(px(134)) + .5} ${t}v${h}`});
}

function draw() {
    drawFreq();
    drawImpulse();
}
window.onresize = draw;
draw();
```
